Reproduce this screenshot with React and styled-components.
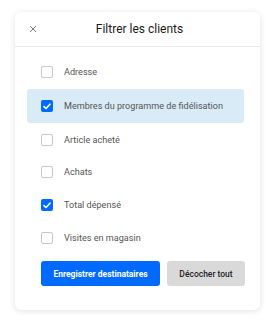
import styled, {createGlobalStyle} from "styled-components";

const Global = createGlobalStyle`
  body {
    margin: 0;
    background: #ffffff;
    font-family: "Roboto", "Liberation Sans", sans-serif;
  }
`;

const Page = styled.div`
  padding: 12px 16px 12px 15px;
`;

const Card = styled.div`
  width: 245px;
  height: 298px;
  background: #ffffff;
  border-radius: 6px;
  box-shadow: 0 1px 6px rgba(0, 0, 0, 0.12);
  display: flex;
  flex-direction: column;
  box-sizing: border-box;
`;

const Header = styled.div`
  height: 35px;
  display: flex;
  align-items: center;
  justify-content: center;
  position: relative;
  border-bottom: 1px solid #e8e8e8;
  box-sizing: border-box;
`;

const Close = styled.button`
  position: absolute;
  left: 12px;
  top: 11px;
  width: 12px;
  height: 12px;
  padding: 0;
  border: 0;
  background: none;
  display: flex;
  align-items: center;
  justify-content: center;
`;

const Title = styled.h1`
  margin: 0 0 0 4px;
  font-size: 12px;
  font-weight: 400;
  color: #1a1a1a;
`;

const List = styled.div`
  display: flex;
  flex-direction: column;
  padding: 8px 16px 0 12px;
`;

const Row = styled.label`
  height: ${props => props.h || 33}px;
  display: flex;
  align-items: center;
  gap: 11px;
  padding-left: 14px;
  border-radius: 3px;
  background: ${props => props.highlight ? "#d9ebf7" : "transparent"};
  font-size: 9.1px;
  color: #555555;
`;

const Box = styled.span`
  width: 12px;
  height: 12px;
  box-sizing: border-box;
  border-radius: 2px;
  border: ${props => props.checked ? "none" : "1px solid #c8c8c8"};
  background: ${props => props.checked ? "#006aff" : "#ffffff"};
  display: flex;
  align-items: center;
  justify-content: center;
  flex-shrink: 0;
`;

const Footer = styled.div`
  display: flex;
  gap: 7px;
  padding: 8px 15px 0 26px;
`;

const Button = styled.button`
  height: 25px;
  width: ${props => props.primary ? "119px" : "78px"};
  border: 0;
  border-radius: 3px;
  padding: 0;
  white-space: nowrap;
  font-family: inherit;
  font-size: 8.5px;
  font-weight: ${props => props.primary ? 700 : 500};
  color: ${props => props.primary ? "#ffffff" : "#1f1f1f"};
  background: ${props => props.primary ? "#006aff" : "#d9d9d9"};
`;

const items = [
  {label: "Adresse", checked: false, h: 34},
  {label: "Membres du programme de fidélisation", checked: true, highlight: true, h: 34},
  {label: "Article acheté", checked: false, h: 33},
  {label: "Achats", checked: false, h: 32},
  {label: "Total dépensé", checked: true, h: 34},
  {label: "Visites en magasin", checked: false, h: 31},
];

function Check() {
  return (
    <svg width="8" height="7" viewBox="0 0 8 7">
      <path d="M1 3.6 L3 5.5 L7 1.2" fill="none" stroke="#fff" strokeWidth="1.6" strokeLinecap="round" strokeLinejoin="round" />
    </svg>
  );
}

function App() {
  return (
    <Page>
      <Global />
      <Card>
        <Header>
          <Close>
            <svg width="8" height="8" viewBox="0 0 8 8">
              <path d="M1 1 L7 7 M7 1 L1 7" stroke="#7a7a7a" strokeWidth="1" />
            </svg>
          </Close>
          <Title>Filtrer les clients</Title>
        </Header>
        <List>
          {items.map(item => (
            <Row key={item.label} highlight={item.highlight} h={item.h}>
              <Box checked={item.checked}>{item.checked && <Check />}</Box>
              {item.label}
            </Row>
          ))}
        </List>
        <Footer>
          <Button primary>Enregistrer destinataires</Button>
          <Button>Décocher tout</Button>
        </Footer>
      </Card>
    </Page>
  );
}

export default App;
